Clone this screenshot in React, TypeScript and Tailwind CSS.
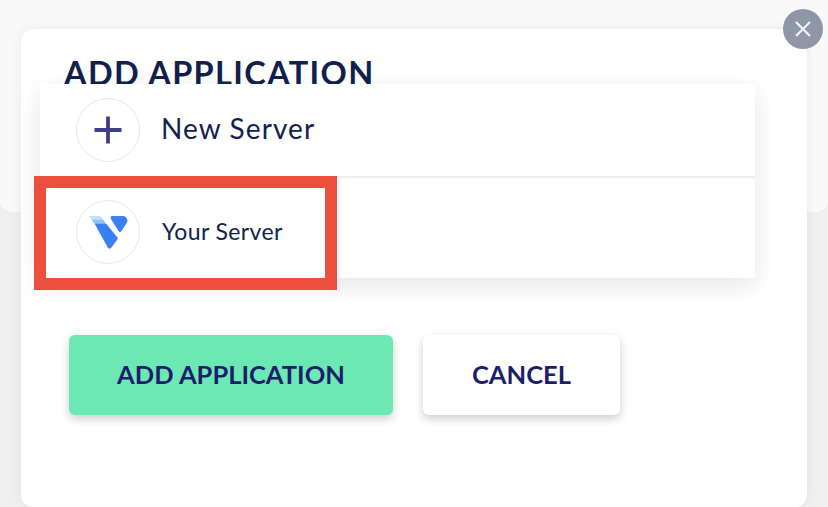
export default function App() {
  return (
    <div className="relative h-[507px] w-[828px] overflow-hidden bg-[#efefef] font-['Lato',sans-serif]">
      <div className="absolute left-0 top-[-20px] h-[232px] w-[828px] rounded-b-[12px] bg-[#f9f9f9]" />
      <div className="absolute left-[21px] top-[29px] h-[478px] w-[786px] rounded-[12px] bg-white shadow-[0_0_12px_rgba(0,0,0,0.06)]">
        <h1 className="ml-[43px] mt-[24px] h-[31px] whitespace-nowrap text-[32.5px] font-bold leading-[40px] tracking-[1.35px] text-[#11214c]">ADD APPLICATION</h1>
        <div className="relative ml-[19px] w-[715px] bg-white shadow-[0_8px_24px_rgba(0,0,0,0.1)]">
          <div className="flex h-[94px] items-start gap-[22px] border-b-2 border-[#eeeeee] pl-[36px] pt-[14px]">
            <div className="flex h-[64px] w-[64px] items-center justify-center rounded-full border border-[#e8e8e8]">
              <svg width="30" height="30" viewBox="0 0 30 30"><path d="M15 1.500v27M1.500 15h27" stroke="#3f3d86" strokeWidth="3.800" fill="none" /></svg>
            </div>
            <span className="-ml-[1px] mt-[13px] text-[28px] leading-[34px] tracking-[1.1px] text-[#11214c]">New Server</span>
          </div>
          <div className="flex h-[100px] items-start gap-[22px] pl-[36px] pt-[22px]">
            <div className="flex h-[64px] w-[64px] items-center justify-center rounded-full border border-[#e8e8e8]">
              <svg width="39" height="33" viewBox="0 0 39 33" className="blur-[0.4px]">
                <path d="M0 0H11L14 3.500H2.500z" fill="#bfe2fc" />
                <path d="M2.500 3.500H14L17 7.500H5.500z" fill="#8cc2f9" />
                <path d="M5.500 7.500H17L28.500 21.500Q29 22.500 28 24L22 32Q20.500 33.500 19 32z" fill="#3a80f2" />
                <path d="M23 0H34.500Q36.500 0 38 3Q39 5 38 6.500L32.500 15Q31 17 29.500 15L22 3Q21 0 23 0z" fill="#3a80f2" />
              </svg>
            </div>
            <span className="mt-[17px] text-[23px] leading-[28px] tracking-[0.4px] text-[#11214c]">Your Server</span>
          </div>
        </div>
        <div className="ml-[48px] mt-[57px] flex gap-[30px]">
          <button className="flex h-[80px] w-[324px] items-center justify-center rounded-[6px] bg-[#6ce8b4] pb-[2px] text-[25.500px] font-bold text-[#1d1d6b] shadow-[0_4px_10px_rgba(0,0,0,0.2)]">ADD APPLICATION</button>
          <button className="flex h-[80px] w-[197px] items-center justify-center rounded-[6px] bg-white pb-[2px] text-[25.500px] font-bold text-[#1d1d6b] shadow-[0_4px_10px_rgba(0,0,0,0.2)]">CANCEL</button>
        </div>
      </div>
      <div className="absolute left-[34px] top-[176px] h-[114px] w-[303px] border-[12px] border-[#ec4f3d]" />
      <div className="absolute left-[783px] top-[9px] flex h-[40px] w-[40px] items-center justify-center rounded-full bg-[#8f96a8]">
        <svg width="16" height="16" viewBox="0 0 16 16"><path d="M1 1l14 14M15 1L1 15" stroke="#f3f3f5" strokeWidth="2.200" fill="none" /></svg>
      </div>
    </div>
  );
}
